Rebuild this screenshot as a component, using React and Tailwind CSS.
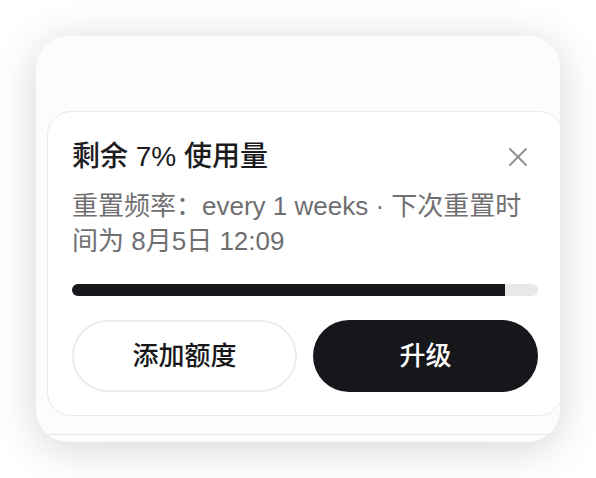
import React from 'react';

// Usage-limit card: remaining quota, reset schedule, progress bar and two actions.
const usage = {
  remaining: 7,
  period: 'every 1 weeks',
  nextReset: '8月5日 12:09',
};

function CloseIcon() {
  return (
    <svg width="18" height="18" viewBox="0 0 18 18" fill="none" stroke="#8e8e8e" strokeWidth="1.8" strokeLinecap="round">
      <path d="M1 1L17 17" />
      <path d="M17 1L1 17" />
    </svg>
  );
}

export default function App() {
  const used = 100 - usage.remaining;

  return (
    <div className="min-h-screen bg-white pt-[36px] pl-[36px] font-['Liberation_Sans','Noto_Sans_CJK_SC',sans-serif]">
      <div className="w-[524px] h-[406px] flex flex-col overflow-hidden rounded-[32px] bg-[#fcfcfc] shadow-[0_6px_44px_rgba(0,0,0,0.17)]">
        {/* Empty header area above the card */}
        <div className="h-[75px] flex-shrink-0" />

        <div className="pl-[11px] flex-shrink-0">
          <div className="w-[516px] rounded-[24px] border border-[#e9e9e9] bg-white px-[24px] pt-[27px] pb-[23px]">
            <div className="flex items-center justify-between">
              <p className="text-[28px] leading-[36px] font-medium text-[#1c1c1e]">
                剩余 {usage.remaining}% 使用量
              </p>
              <button className="mr-[11px] flex items-center justify-center" title="关闭">
                <CloseIcon />
              </button>
            </div>

            <p className="mt-[14px] text-[26px] leading-[35px] text-[#6f6f72]">
              重置频率：{usage.period} · 下次重置时间为 {usage.nextReset}
            </p>

            <div className="mt-[25px] h-[12px] w-full overflow-hidden rounded-full bg-[#e8e8e8]">
              <div className="h-full bg-[#17181c]" style={{ width: `${used}%` }} />
            </div>

            <div className="mt-[24px] grid grid-cols-2 gap-4">
              <button className="h-[72px] rounded-full border-2 border-[#ececec] bg-white text-[26px] font-medium text-[#18181b]">
                添加额度
              </button>
              <button className="h-[72px] rounded-full bg-[#16171b] text-[26px] font-medium text-white">
                升级
              </button>
            </div>
          </div>
        </div>

        <div className="mt-[18px] flex-1 border-t border-[#e6e6e6]" />
      </div>
    </div>
  );
}
